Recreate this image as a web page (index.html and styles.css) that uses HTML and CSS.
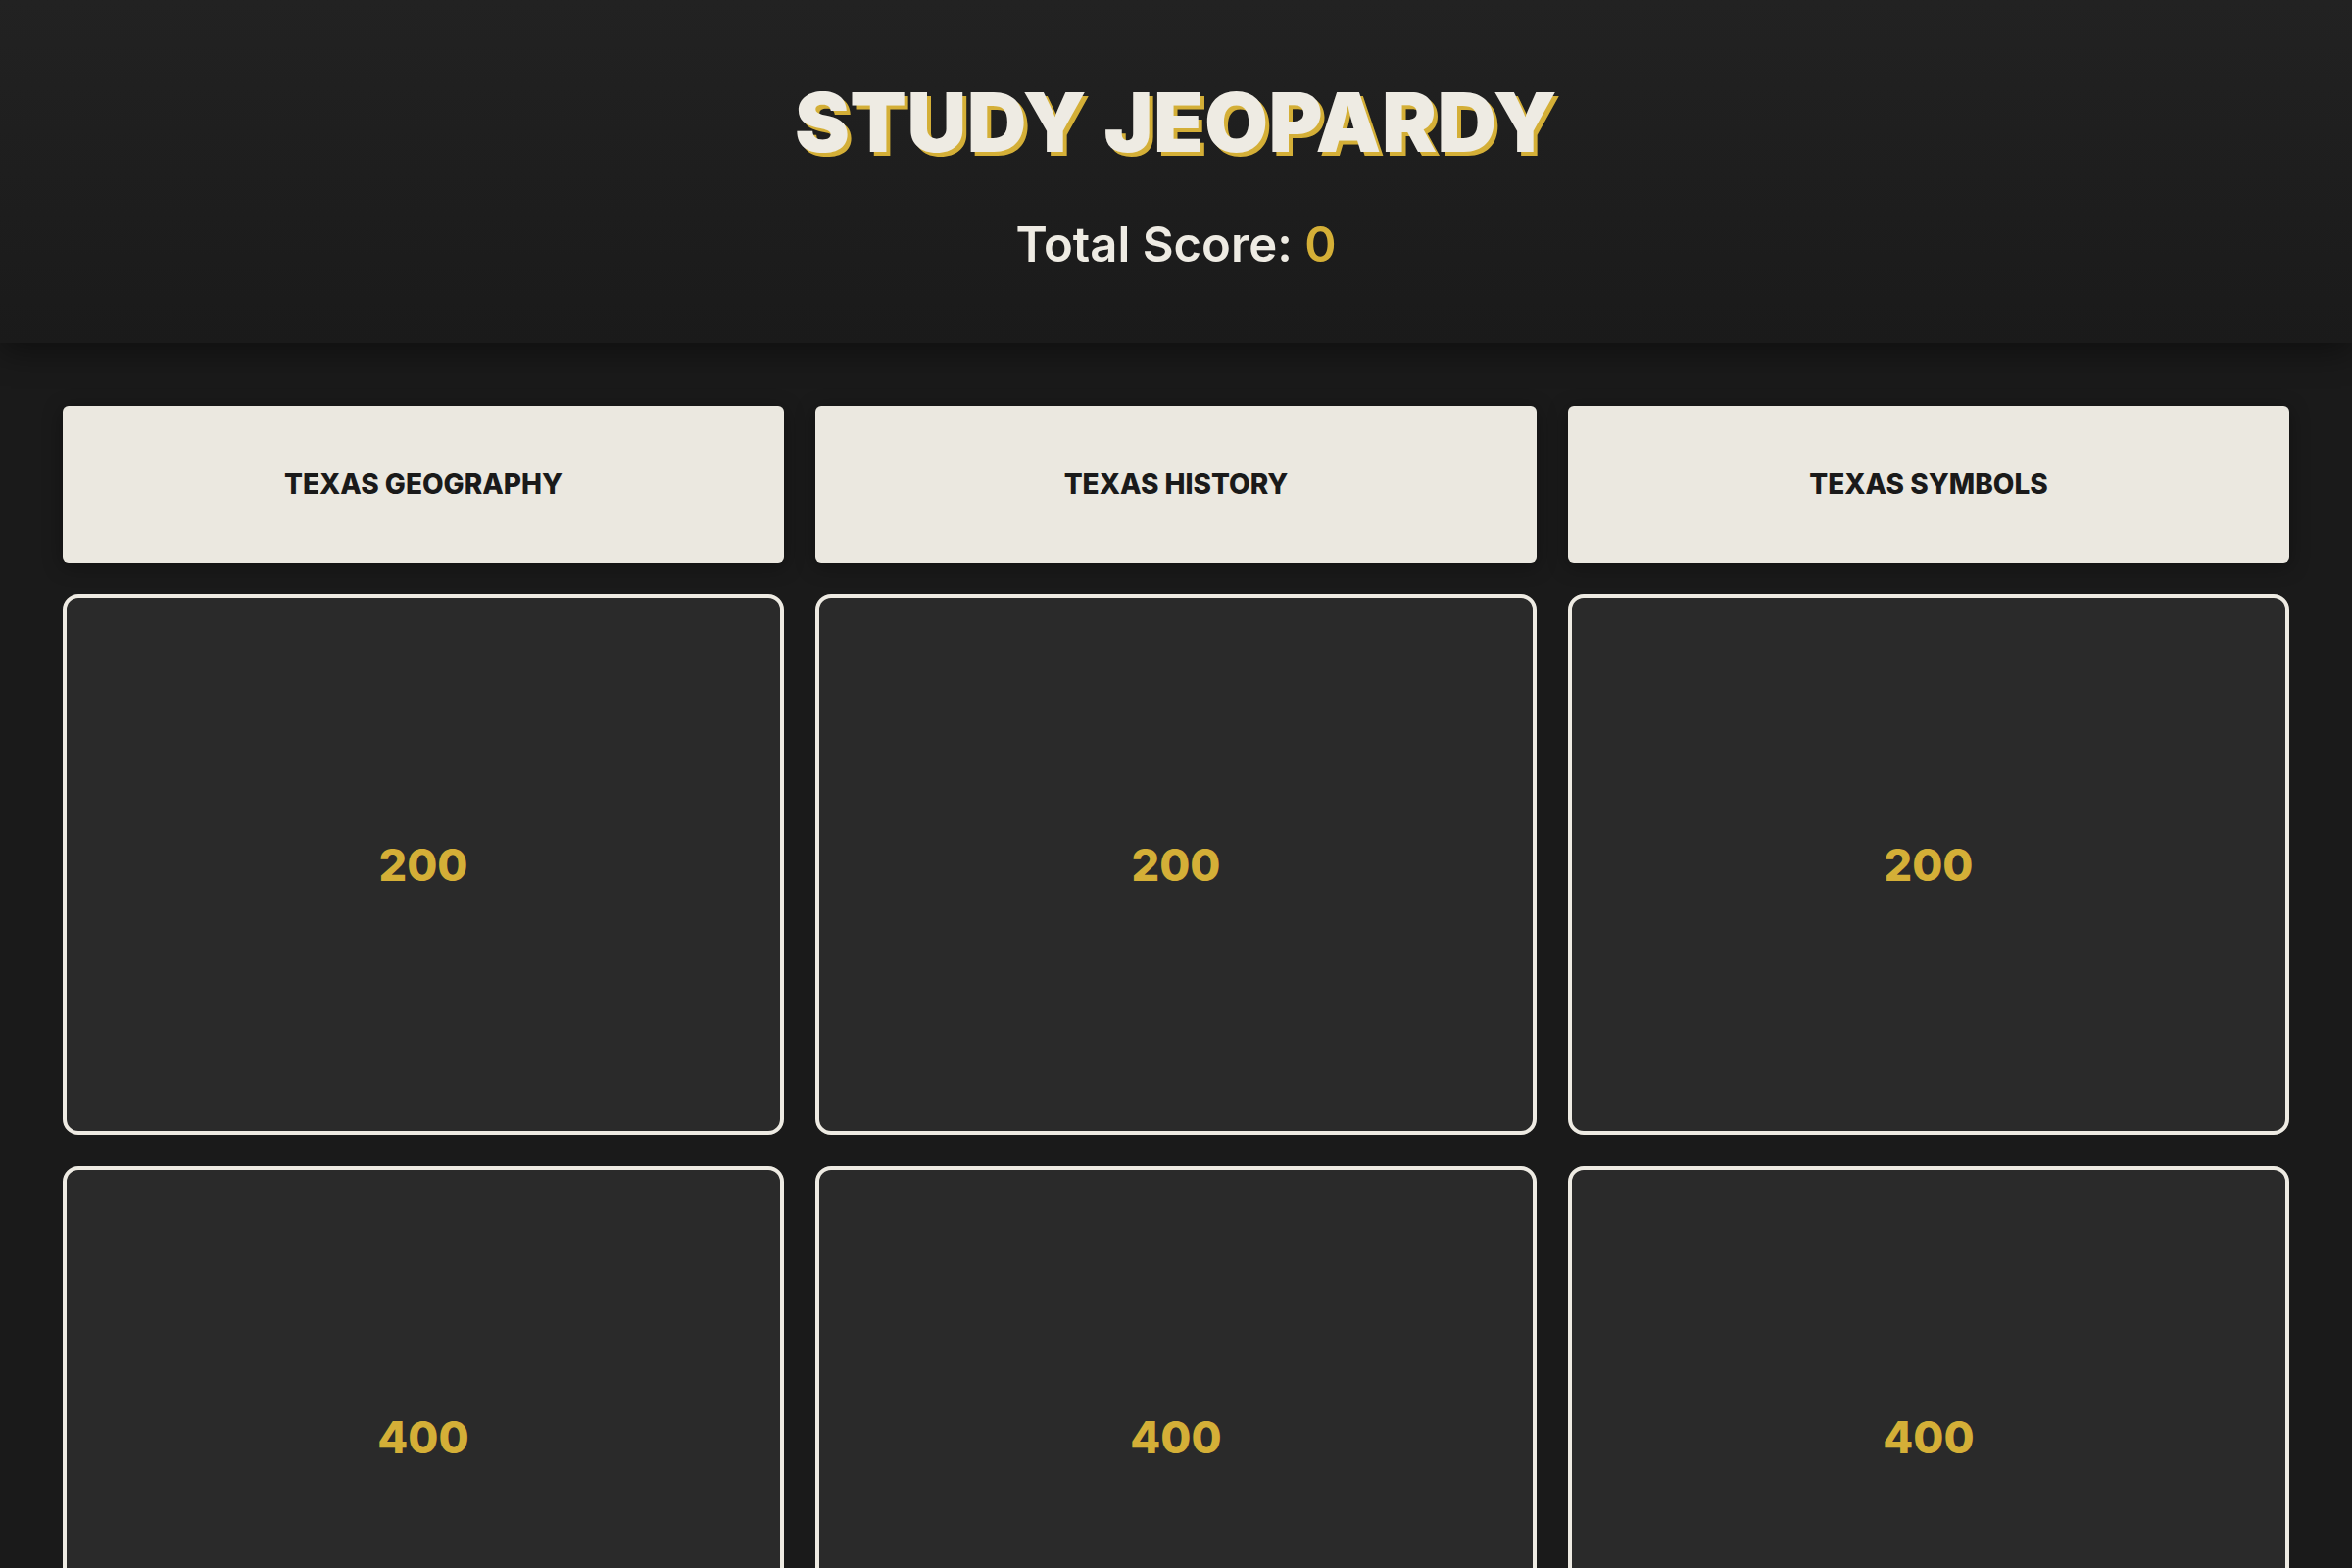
FILE: index.html
```html
<!DOCTYPE html>
<html lang="en">
<head>
<meta charset="utf-8">
<title>Study Jeopardy</title>
<link rel="stylesheet" href="styles.css">
</head>
<body>
<header class="header">
  <h1 class="title">STUDY JEOPARDY</h1>
  <div class="score">Total Score: <span class="score-value">0</span></div>
</header>
<main class="board">
  <div class="category">TEXAS GEOGRAPHY</div>
  <div class="category">TEXAS HISTORY</div>
  <div class="category">TEXAS SYMBOLS</div>
  <div class="cell">200</div>
  <div class="cell">200</div>
  <div class="cell">200</div>
  <div class="cell">400</div>
  <div class="cell">400</div>
  <div class="cell">400</div>
  <div class="cell">600</div>
  <div class="cell">600</div>
  <div class="cell">600</div>
  <div class="cell">800</div>
  <div class="cell">800</div>
  <div class="cell">800</div>
  <div class="cell">1000</div>
  <div class="cell">1000</div>
  <div class="cell">1000</div>
</main>
</body>
</html>
```
FILE: styles.css
```css
* { box-sizing: border-box; }
html, body { margin: 0; padding: 0; }
body {
  background: #1a1a1a;
  font-family: "Inter", "Liberation Sans", sans-serif;
  color: #eeebe3;
}
.header {
  position: relative;
  z-index: 1;
  height: 350px;
  padding-top: 72px;
  display: flex;
  flex-direction: column;
  align-items: center;
  background: linear-gradient(180deg, #222222 0%, #1a1a1a 100%);
  box-shadow: 0 8px 32px rgba(0, 0, 0, 0.45);
}
.title {
  margin: 0;
  font-size: 84px;
  line-height: 106px;
  font-weight: 900;
  letter-spacing: 0.5px;
  color: #eeebe3;
  text-shadow: 4px 4px 0 #d4af37;
}
.score {
  margin-top: 43px;
  font-size: 49px;
  line-height: 58px;
  font-weight: 600;
  color: #eeebe3;
}
.score-value { color: #d4af37; }
.board {
  display: grid;
  grid-template-columns: repeat(3, 1fr);
  gap: 32px;
  padding: 64px;
}
.category {
  height: 160px;
  display: flex;
  align-items: center;
  justify-content: center;
  background: #ebe8e0;
  color: #1a1a1a;
  border-radius: 6px;
  font-size: 28px;
  font-weight: 800;
  box-shadow: 0 4px 20px rgba(0, 0, 0, 0.35);
}
.cell {
  aspect-ratio: 4 / 3;
  display: flex;
  align-items: center;
  justify-content: center;
  background: #2a2a2a;
  border: 4px solid #eeebe3;
  border-radius: 16px;
  color: #d4af37;
  font-size: 45px;
  font-weight: 800;
}
```
